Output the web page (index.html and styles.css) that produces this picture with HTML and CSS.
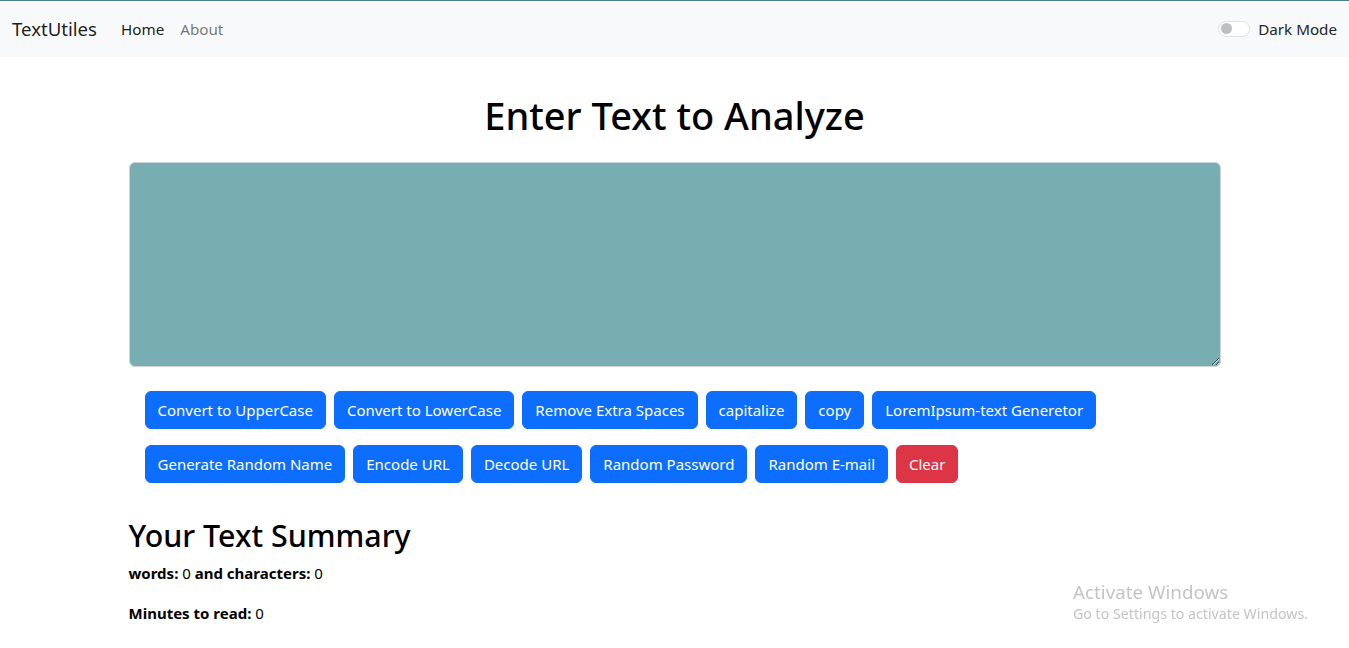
FILE: index.html
```html
<!DOCTYPE html>
<html lang="en">
<head>
<meta charset="utf-8">
<title>TextUtiles</title>
<link rel="stylesheet" href="styles.css">
</head>
<body>
<nav class="navbar">
  <div class="nav-left">
    <a class="brand" href="#">TextUtiles</a>
    <a class="nav-link active" href="#">Home</a>
    <a class="nav-link" href="#">About</a>
  </div>
  <div class="switch">
    <span class="switch-track"><span class="switch-knob"></span></span>
    <span class="switch-label">Dark Mode</span>
  </div>
</nav>

<main class="container">
  <h1 class="title">Enter Text to Analyze</h1>
  <textarea class="text-box" rows="8"></textarea>
  <div class="buttons">
    <button class="btn">Convert to UpperCase</button>
    <button class="btn">Convert to LowerCase</button>
    <button class="btn">Remove Extra Spaces</button>
    <button class="btn">capitalize</button>
    <button class="btn">copy</button>
    <button class="btn">LoremIpsum-text Generetor</button>
    <button class="btn">Generate Random Name</button>
    <button class="btn">Encode URL</button>
    <button class="btn">Decode URL</button>
    <button class="btn">Random Password</button>
    <button class="btn">Random E-mail</button>
    <button class="btn btn-danger">Clear</button>
  </div>

  <section class="summary">
    <h2 class="summary-title">Your Text Summary</h2>
    <p><b>words:</b> 0 <b>and characters:</b> 0</p>
    <p><b>Minutes to read:</b> 0</p>
  </section>
</main>

<div class="watermark">
  <div class="wm-title">Activate Windows</div>
  <div class="wm-sub">Go to Settings to activate Windows.</div>
</div>
</body>
</html>
```
FILE: styles.css
```css
* { box-sizing: border-box; }
html, body { margin: 0; }
body {
  font-family: "Noto Sans", "Open Sans", sans-serif;
  font-size: 15.2px;
  line-height: 1.5;
  color: #212529;
  background: #fff;
  overflow: hidden;
}
.navbar {
  display: flex;
  align-items: center;
  justify-content: space-between;
  height: 57px;
  padding: 0 12px;
  background: #f8f9fa;
  border-top: 1px solid #4a8193;
}
.nav-left { display: flex; align-items: center; }
.brand {
  font-size: 18.6px;
  color: rgba(0,0,0,.9);
  text-decoration: none;
  margin-right: 16px;
}
.nav-link {
  padding: 8px;
  text-decoration: none;
  color: rgba(0,0,0,.55);
}
.nav-link.active { color: rgba(0,0,0,.9); }
.switch { display: flex; align-items: center; gap: 8px; }
.switch-track {
  width: 32px;
  height: 16px;
  border: 1px solid #dee2e6;
  border-radius: 16px;
  background: #fff;
  display: flex;
  align-items: center;
  padding-left: 2px;
}
.switch-knob {
  width: 11px; height: 11px; border-radius: 50%;
  background: #bfbfbf;
}
.switch-label { color: #212529; }

.container {
  width: 1092px;
  margin: 0 auto;
}
.title {
  text-align: center;
  font-size: 38px;
  font-weight: 500;
  line-height: 1.2;
  color: #000;
  margin: 36px 0 23px;
}
.text-box {
  display: block;
  width: 100%;
  height: 205px;
  background: #78aeb1;
  border: 1px solid #ced4da;
  border-radius: 6px;
  resize: vertical;
}
.buttons {
  display: flex;
  flex-wrap: wrap;
  column-gap: 8px;
  row-gap: 16px;
  padding: 24px 16px 0;
}
.btn {
  font-family: inherit;
  font-size: 15px;
  line-height: 24px;
  padding: 6px 12px;
  height: 38px;
  color: #fff;
  background: #0d6efd;
  border: 1px solid #0d6efd;
  border-radius: 6px;
}
.btn-danger { background: #dc3545; border-color: #dc3545; }

.summary { margin-top: 35px; }
.summary-title {
  font-size: 30.4px;
  font-weight: 500;
  line-height: 1.2;
  color: #000;
  margin: 0 0 7px;
}
.summary p { margin: 0 0 16px; color: #000; font-size: 15px; line-height: 24px; }
.summary b { font-weight: 700; }

.watermark {
  position: fixed;
  left: 1073px;
  top: 580px;
  color: #c4c4c4;
  pointer-events: none;
}
.wm-title { font-size: 18.8px; line-height: 24px; }
.wm-sub { font-size: 14.2px; line-height: 20px; }
```
